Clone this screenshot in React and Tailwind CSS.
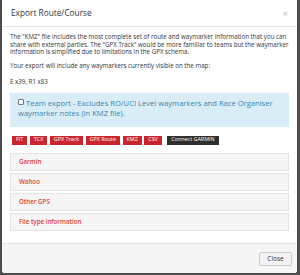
export default function App() {
  const fileTypes = ["FIT", "TCX", "GPX Track", "GPX Route", "KMZ", "CSV"];
  const sections = ["Garmin", "Wahoo", "Other GPS", "File type information"];

  return (
    <div className="w-[300px] h-[275px] bg-[#4d4d4d] overflow-hidden font-['Open_Sans',sans-serif]">
      <div className="ml-[2px] w-[295px] h-[273px] bg-white flex flex-col rounded-b-[3px] overflow-hidden">
        {/* header */}
        <div className="h-[27px] shrink-0 border-b border-[#e5e5e5] pl-[9px] pr-[9px] flex items-center justify-between">
          <span className="text-[8.3px] text-[#333]">Export Route/Course</span>
          <span className="text-[9px] leading-none text-[#bbb]">×</span>
        </div>

        {/* body */}
        <div className="px-[8px] pt-[6px] text-[6.2px] leading-[7.5px] text-[#333]">
          <p className="mb-[6px]">
            The "KMZ" file includes the most complete set of route and waymarker information that you can
            share with external parties. The "GPX Track" would be more familiar to teams but the waymarker
            information is simplified due to limitations in the GPX schema.
          </p>
          <p className="mb-[9px]">Your export will include any waymarkers currently visible on the map:</p>
          <p className="mb-[7px]">E x39, R1 x83</p>

          <div className="bg-[#d9edf7] text-[#3a87ad] text-[7.6px] leading-[10px] px-[8px] pt-[5px] pb-[9px]">
            <label>
              <span className="inline-block align-middle w-[6px] h-[6px] border border-[#777] bg-white rounded-[1px] mr-[2px] mb-[2px]" />
              Team export - Excludes RO/UCI Level waymarkers and Race Organiser waymarker notes (in KMZ file).
            </label>
          </div>

          <div className="flex items-center gap-[2.5px] mt-[9px] ml-[2px]">
            {fileTypes.map((t) => (
              <span
                key={t}
                className="h-[9px] px-[4px] flex items-center bg-[#c9262e] text-white text-[5.4px] font-medium leading-none"
              >
                {t}
              </span>
            ))}
            <span className="h-[9px] px-[4px] ml-[3px] flex items-center bg-[#2f2f2f] text-white text-[5.4px] font-medium leading-none">
              Connect GARMIN
            </span>
          </div>

          <div className="mt-[8px] flex flex-col gap-[2px]">
            {sections.map((s) => (
              <div
                key={s}
                className="h-[18px] bg-[#f5f5f5] border border-[#e3e3e3] flex items-center px-[8px] text-[6.2px] font-semibold text-[#e0403f]"
              >
                {s}
              </div>
            ))}
          </div>
        </div>

        {/* footer */}
        <div className="mt-auto h-[30px] shrink-0 bg-[#f5f5f5] border-t border-[#e5e5e5] flex items-center justify-end pr-[5px]">
          <button className="h-[14px] w-[33px] bg-[#f3f3f3] border border-[#ccc] rounded-[2px] text-[6.5px] text-[#333] flex items-center justify-center">
            Close
          </button>
        </div>
      </div>
    </div>
  );
}
